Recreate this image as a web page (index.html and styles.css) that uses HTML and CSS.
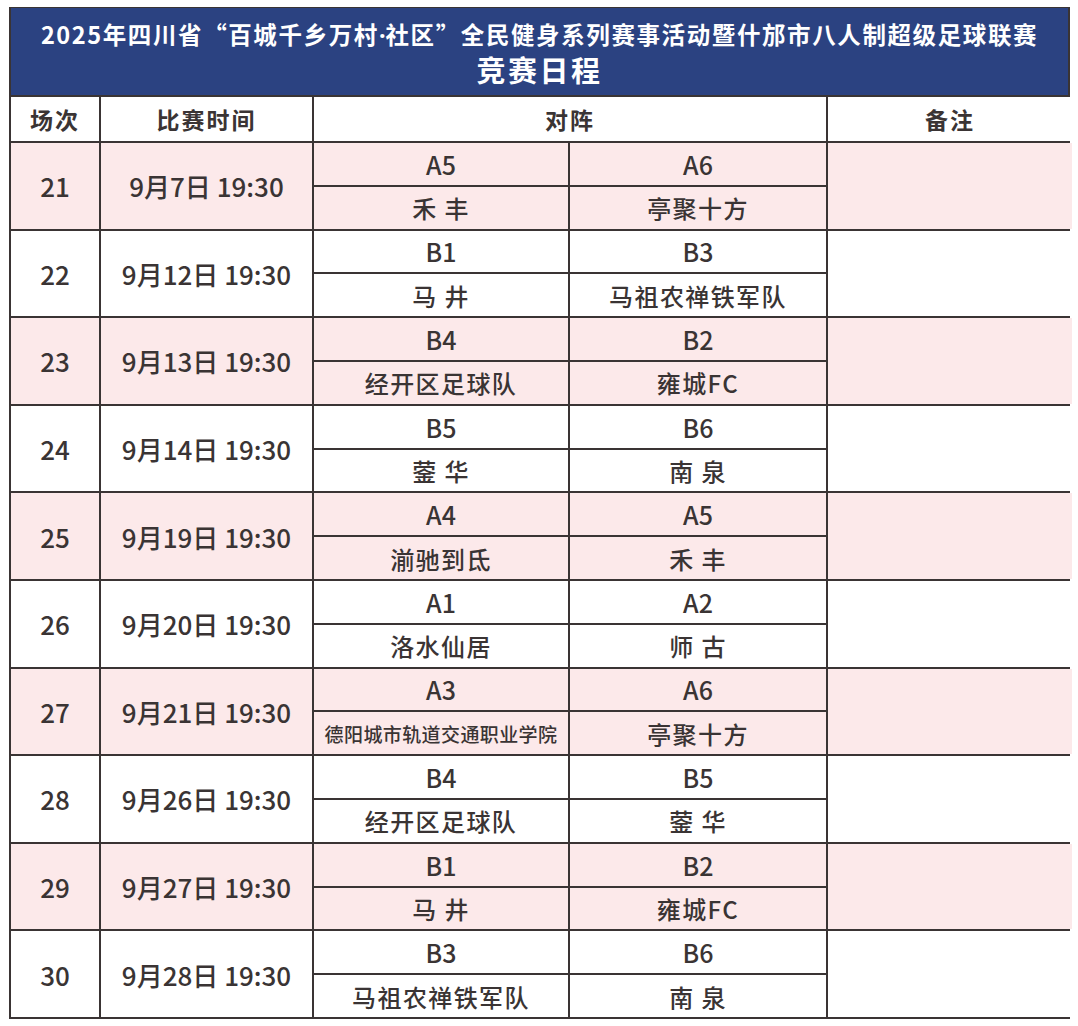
FILE: index.html
```html
<!DOCTYPE html>
<html lang="zh-CN">
<head>
<meta charset="utf-8">
<title>竞赛日程</title>
<link rel="stylesheet" href="styles.css">
</head>
<body>
<div class="sheet">
  <div class="banner">
    <div class="title">2025年四川省“百城千乡万村<span class="dot">·</span>社区”全民健身系列赛事活动暨什邡市八人制超级足球联赛</div>
    <div class="subtitle">竞赛日程</div>
  </div>
  <div class="grid">
    <div class="cell head">场次</div>
    <div class="cell head">比赛时间</div>
    <div class="cell head span-teams">对阵</div>
    <div class="cell head">备注</div>

    <div class="cell num pink span2">21</div>
    <div class="cell time pink span2">9月7日 19:30</div>
    <div class="cell code pink">A5</div>
    <div class="cell code pink">A6</div>
    <div class="cell pink span2"></div>
    <div class="cell name pink">禾 丰</div>
    <div class="cell name pink">亭聚十方</div>

    <div class="cell num span2">22</div>
    <div class="cell time span2">9月12日 19:30</div>
    <div class="cell code">B1</div>
    <div class="cell code">B3</div>
    <div class="cell span2"></div>
    <div class="cell name">马 井</div>
    <div class="cell name">马祖农禅铁军队</div>

    <div class="cell num pink span2">23</div>
    <div class="cell time pink span2">9月13日 19:30</div>
    <div class="cell code pink">B4</div>
    <div class="cell code pink">B2</div>
    <div class="cell pink span2"></div>
    <div class="cell name pink">经开区足球队</div>
    <div class="cell name pink">雍城FC</div>

    <div class="cell num span2">24</div>
    <div class="cell time span2">9月14日 19:30</div>
    <div class="cell code">B5</div>
    <div class="cell code">B6</div>
    <div class="cell span2"></div>
    <div class="cell name">蓥 华</div>
    <div class="cell name">南 泉</div>

    <div class="cell num pink span2">25</div>
    <div class="cell time pink span2">9月19日 19:30</div>
    <div class="cell code pink">A4</div>
    <div class="cell code pink">A5</div>
    <div class="cell pink span2"></div>
    <div class="cell name pink">湔驰到氐</div>
    <div class="cell name pink">禾 丰</div>

    <div class="cell num span2">26</div>
    <div class="cell time span2">9月20日 19:30</div>
    <div class="cell code">A1</div>
    <div class="cell code">A2</div>
    <div class="cell span2"></div>
    <div class="cell name">洛水仙居</div>
    <div class="cell name">师 古</div>

    <div class="cell num pink span2">27</div>
    <div class="cell time pink span2">9月21日 19:30</div>
    <div class="cell code pink">A3</div>
    <div class="cell code pink">A6</div>
    <div class="cell pink span2"></div>
    <div class="cell name small pink">德阳城市轨道交通职业学院</div>
    <div class="cell name pink">亭聚十方</div>

    <div class="cell num span2">28</div>
    <div class="cell time span2">9月26日 19:30</div>
    <div class="cell code">B4</div>
    <div class="cell code">B5</div>
    <div class="cell span2"></div>
    <div class="cell name">经开区足球队</div>
    <div class="cell name">蓥 华</div>

    <div class="cell num pink span2">29</div>
    <div class="cell time pink span2">9月27日 19:30</div>
    <div class="cell code pink">B1</div>
    <div class="cell code pink">B2</div>
    <div class="cell pink span2"></div>
    <div class="cell name pink">马 井</div>
    <div class="cell name pink">雍城FC</div>

    <div class="cell num span2">30</div>
    <div class="cell time span2">9月28日 19:30</div>
    <div class="cell code">B3</div>
    <div class="cell code">B6</div>
    <div class="cell span2"></div>
    <div class="cell name">马祖农禅铁军队</div>
    <div class="cell name">南 泉</div>
  </div>
</div>
</body>
</html>
```
FILE: styles.css
```css
html, body {
  margin: 0;
  padding: 0;
  background: #ffffff;
}

body {
  font-family: "Noto Sans CJK SC", "Noto Sans", sans-serif;
  color: #3a3434;
  padding: 7px 0 0 9px;
}

.sheet {
  width: 1061px;
  background: #3a3434;
  padding: 1px 2px 2px 2px;
  box-sizing: border-box;
}

.banner {
  background: #2b4281;
  color: #ffffff;
  height: 87px;
  display: flex;
  flex-direction: column;
  align-items: center;
  justify-content: center;
  font-weight: 700;
}

.title {
  font-size: 23.5px;
  line-height: 32px;
  letter-spacing: 1.6px;
  margin-top: 2px;
}

.dot {
  font-family: "Noto Sans", "DejaVu Sans", sans-serif;
  letter-spacing: 0;
}

.subtitle {
  font-size: 29px;
  line-height: 36px;
  letter-spacing: 2.5px;
}

.grid {
  display: grid;
  grid-template-columns: 88px 211px 254px 256px 244px;
  grid-template-rows: 44px repeat(20, 41.8px);
  gap: 2px;
  margin-top: 2px;
}

.cell {
  background: #ffffff;
  display: flex;
  align-items: center;
  justify-content: center;
  white-space: nowrap;
}

.pink {
  background: #fce9ea;
}

.span2 {
  grid-row: span 2;
}

.span-teams {
  grid-column: span 2;
}

.head {
  font-size: 23px;
  font-weight: 700;
  letter-spacing: 2px;
}

.num {
  font-size: 26px;
  font-weight: 500;
}

.time {
  font-size: 26px;
  font-weight: 500;
}

.code {
  font-size: 25px;
  font-weight: 500;
}

.name {
  font-size: 24px;
  font-weight: 500;
  letter-spacing: 1.4px;
}

.name.small {
  font-size: 19px;
  letter-spacing: 0.4px;
}
```
